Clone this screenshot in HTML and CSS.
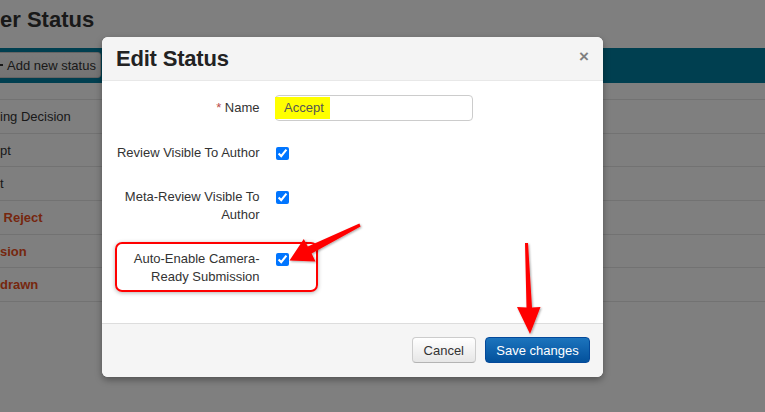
FILE: index.html
```html
<!DOCTYPE html>
<html lang="en">

<head>
    <meta charset="UTF-8">
    <meta name="viewport" content="width=device-width, initial-scale=1.0">
    <title>Paper Status</title>
    <link rel="stylesheet" href="styles.css">
</head>

<body>
    <div class="page">
        <h1 class="page-title">er Status</h1>
        <div class="toolbar">
            <button class="btn-add"><span class="plus"></span>Add new status</button>
        </div>
        <table class="status-table">
            <tr><td>ing Decision</td></tr>
            <tr><td>pt</td></tr>
            <tr><td>t</td></tr>
            <tr><td class="final">&nbsp;Reject</td></tr>
            <tr><td class="final">sion</td></tr>
            <tr><td class="final">drawn</td></tr>
        </table>
    </div>

    <div class="backdrop"></div>

    <div class="modal">
        <div class="modal-header">
            <h3>Edit Status</h3>
            <span class="close">&times;</span>
        </div>
        <div class="modal-body">
            <div class="form-row name-row">
                <label><span class="req">*</span> Name</label>
                <div class="text-input"><span class="mark">Accept</span></div>
            </div>
            <div class="form-row">
                <label>Review Visible To Author</label>
                <input type="checkbox" checked>
            </div>
            <div class="form-row">
                <label>Meta-Review Visible To Author</label>
                <input type="checkbox" checked>
            </div>
            <div class="form-row">
                <label>Auto-Enable Camera-Ready Submission</label>
                <input type="checkbox" checked>
            </div>
        </div>
        <div class="modal-footer">
            <button class="btn">Cancel</button>
            <button class="btn btn-primary">Save changes</button>
        </div>
    </div>

    <!-- screenshot annotations -->
    <div class="callout-box"></div>
    <svg class="arrows" width="765" height="412" viewBox="0 0 765 412">
        <defs>
            <filter id="drop" x="-20%" y="-20%" width="140%" height="140%">
                <feDropShadow dx="1" dy="1" stdDeviation="1.2" flood-color="#000" flood-opacity="0.35"/>
            </filter>
        </defs>
        <polygon filter="url(#drop)" fill="#f00"
            points="359.4,223.6 360.6,226.4 311.6,253.6 315.5,261.5 289.5,260.5 303.8,239 307.8,246.6"/>
        <polygon filter="url(#drop)" fill="#f00"
            points="525,243 528,243 532,307.5 540.5,307 530,334 517,307 526.5,307.5"/>
    </svg>
</body>

</html>
```

FILE: styles.css
```css
body {
    margin: 0;
    padding: 0;
    width: 765px;
    height: 412px;
    overflow: hidden;
    position: relative;
    background-color: #FFFFFF;
    color: #333;
    font-family: "Liberation Sans", Arial, sans-serif;
    font-size: 13px;
}

.page-title {
    margin: 0;
    height: 48px;
    line-height: 40px;
    font-size: 22px;
    color: #333;
}

.toolbar {
    background-color: #007ea0;
    padding: 4px 0 5px;
}

.btn-add {
    display: flex;
    align-items: center;
    margin-left: -15px;
    width: 116px;
    height: 26px;
    padding: 0 0 0 9px;
    background: linear-gradient(#f6f6f6, #e8e8e8);
    border: 1px solid #c8c8c8;
    border-radius: 3px;
    color: #333;
    font-family: inherit;
    font-size: 13px;
}

.plus {
    position: relative;
    width: 8px;
    height: 8px;
    margin-right: 4px;
}

.plus::before,
.plus::after {
    content: "";
    position: absolute;
    background-color: #333;
}

.plus::before {
    left: 0;
    top: 3px;
    width: 8px;
    height: 1.5px;
}

.plus::after {
    left: 3.3px;
    top: 0;
    width: 1.5px;
    height: 8px;
}

.status-table {
    width: 100%;
    margin-top: 16px;
    border-collapse: collapse;
    border-top: 1px solid #e5e5e5;
}

.status-table td {
    height: 32.7px;
    padding: 0;
    border-bottom: 1px solid #e5e5e5;
    vertical-align: middle;
}

.status-table .final {
    color: #ec4e1c;
    font-weight: bold;
}

.backdrop {
    position: absolute;
    inset: 0;
    background-color: rgba(0, 0, 0, 0.5);
}

.modal {
    position: absolute;
    left: 102px;
    top: 37px;
    width: 501px;
    background-color: #FFFFFF;
    border-radius: 6px;
    overflow: hidden;
    box-shadow: 0 3px 7px rgba(0, 0, 0, 0.35);
}

.modal-header {
    display: flex;
    align-items: center;
    justify-content: space-between;
    height: 43px;
    padding: 0 14px 0 14px;
    background-color: #f4f4f4;
    border-bottom: 1px solid #e8e8e8;
}

.modal-header h3 {
    margin: 0;
    font-size: 22px;
    color: #222;
    letter-spacing: -0.2px;
}

.close {
    margin-top: -4px;
    font-size: 17px;
    font-weight: bold;
    color: #808080;
}

.modal-body {
    height: 214px;
    padding: 14px 14px;
}

.form-row {
    display: flex;
    align-items: flex-start;
    margin-bottom: 26px;
}

.form-row label {
    width: 143.5px;
    margin-right: 15.5px;
    text-align: right;
    line-height: 18px;
}

.form-row input[type="checkbox"] {
    width: 13px;
    height: 13px;
    margin: 2.5px 0 0 1px;
}

.name-row {
    margin-bottom: 23px;
}

.name-row label {
    line-height: 26px;
}

.req {
    color: #b94a48;
}

.text-input {
    display: flex;
    align-items: center;
    box-sizing: border-box;
    width: 198px;
    height: 26px;
    border: 1px solid #ccc;
    border-radius: 4px;
}

.mark {
    margin-left: -1px;
    width: 46px;
    height: 22px;
    padding-left: 9px;
    line-height: 22px;
    background-color: #ffff00;
    color: #555;
}

.modal-footer {
    display: flex;
    justify-content: flex-end;
    gap: 9px;
    box-sizing: border-box;
    height: 54px;
    padding: 13px 13px 0;
    background-color: #f5f5f5;
    border-top: 1px solid #ddd;
}

.btn {
    height: 26px;
    padding: 0 11px;
    background: linear-gradient(#ffffff, #e6e6e6);
    border: 1px solid #ccc;
    border-bottom-color: #b3b3b3;
    border-radius: 4px;
    color: #333;
    font-family: inherit;
    font-size: 13px;
    cursor: pointer;
}

.btn-primary {
    padding: 0 10px;
    width: 105px;
    background: linear-gradient(#1c74bd, #03519c);
    border-color: #04499a;
    color: #FFFFFF;
}

.callout-box {
    position: absolute;
    left: 115px;
    top: 242px;
    width: 203px;
    height: 50px;
    box-sizing: border-box;
    border: 2px solid #f00;
    border-radius: 7px;
    box-shadow: 0 1px 4px rgba(0, 0, 0, 0.3);
}

.arrows {
    position: absolute;
    left: 0;
    top: 0;
}
```
